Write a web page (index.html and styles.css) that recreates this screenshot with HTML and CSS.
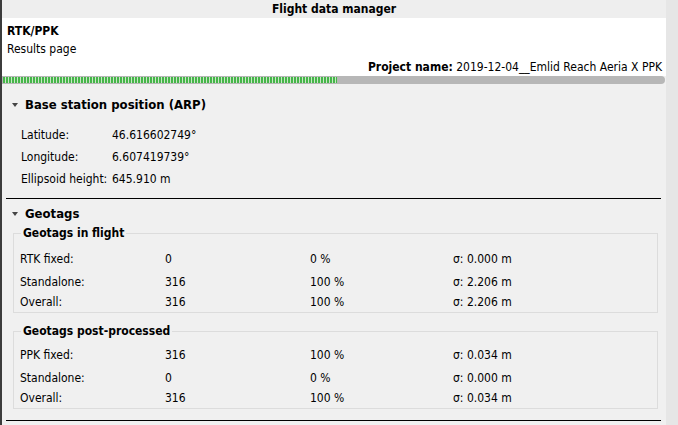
FILE: index.html
```html
<!DOCTYPE html>
<html>
<head>
<meta charset="utf-8">
<link rel="stylesheet" href="styles.css">
</head>
<body>
<div class="app">
  <div class="main">
    <div class="titlebar">Flight data manager</div>
    <div class="header">
      <div class="h-title">RTK/PPK</div>
      <div class="h-sub">Results page</div>
      <div class="h-project"><b>Project name:</b> 2019-12-04__Emlid Reach Aeria X PPK</div>
    </div>
    <div class="progress"><div class="progress-fill" style="width:50.5%"></div></div>

    <div class="section">
      <div class="sec-head"><span class="tri"></span>Base station position (ARP)</div>
      <div class="kv">
        <div class="kv-row"><span class="k">Latitude:</span><span class="v">46.616602749°</span></div>
        <div class="kv-row"><span class="k">Longitude:</span><span class="v">6.607419739°</span></div>
        <div class="kv-row"><span class="k">Ellipsoid height:</span><span class="v">645.910 m</span></div>
      </div>
    </div>
    <div class="rule"></div>

    <div class="section geo">
      <div class="sec-head"><span class="tri"></span>Geotags</div>
      <fieldset class="group">
        <legend>Geotags in flight</legend>
        <div class="grow g1"><span>RTK fixed:</span><span>0</span><span>0 %</span><span>σ: 0.000 m</span></div>
        <div class="grow g2"><span>Standalone:</span><span>316</span><span>100 %</span><span>σ: 2.206 m</span></div>
        <div class="grow g3"><span>Overall:</span><span>316</span><span>100 %</span><span>σ: 2.206 m</span></div>
      </fieldset>
      <fieldset class="group group-pp">
        <legend>Geotags post-processed</legend>
        <div class="grow g1"><span>PPK fixed:</span><span>316</span><span>100 %</span><span>σ: 0.034 m</span></div>
        <div class="grow g2"><span>Standalone:</span><span>0</span><span>0 %</span><span>σ: 0.000 m</span></div>
        <div class="grow g3"><span>Overall:</span><span>316</span><span>100 %</span><span>σ: 0.034 m</span></div>
      </fieldset>
    </div>
    <div class="rule rule2"></div>
  </div>
  <div class="scroll"></div>
</div>
</body>
</html>
```
FILE: styles.css
```css
html, body {
  margin: 0;
  padding: 0;
  background: #f0f0f0;
}
body {
  font-family: "DejaVu Sans", sans-serif;
  font-stretch: condensed;
  font-size: 12px;
  color: #000;
  width: 678px;
  height: 425px;
  overflow: hidden;
}
.app {
  display: flex;
  height: 425px;
  align-items: stretch;
}
.main {
  width: 664px;
  flex-shrink: 0;
  border-left: 2px solid #3c3c3c;
  background: #f0f0f0;
  overflow: hidden;
}
.scroll {
  width: 12px;
  flex-shrink: 0;
  background: #e6e6e6;
}
.titlebar {
  height: 18px;
  line-height: 19px;
  text-align: center;
  font-weight: bold;
  font-size: 12px;
  background: #eeeeee;
}
.header {
  background: #fff;
  height: 58px;
  padding: 5px 4px 0 5px;
  box-sizing: border-box;
}
.h-title {
  font-weight: bold;
  font-size: 12px;
  line-height: 17px;
}
.h-sub {
  line-height: 17px;
  margin-top: 1px;
}
.h-project {
  text-align: right;
  line-height: 17px;
  margin-top: 1px;
}
.h-project b {
  font-size: 12px;
}
.progress {
  height: 8px;
  margin-right: 1px;
  background: #b7b7b7;
  border-radius: 0 4px 4px 0;
  padding: 1px 0 1px 1px;
  box-sizing: border-box;
  display: flex;
}
.progress-fill {
  height: 100%;
  background: repeating-linear-gradient(90deg, #45b549 0 2px, #c9e8c6 2px 3px);
}
.section {
  padding: 0 0 0 8px;
}
.sec-head {
  font-weight: bold;
  font-size: 13px;
  height: 24px;
  line-height: 24px;
  margin-top: 9px;
  display: flex;
  align-items: center;
}
.tri {
  width: 0;
  height: 0;
  border-left: 3px solid transparent;
  border-right: 3px solid transparent;
  border-top: 4px solid #444;
  margin: 0 7px 0 2px;
}
.kv {
  padding: 7px 0 0 11px;
}
.kv-row {
  display: flex;
  height: 22px;
  line-height: 22px;
}
.k {
  width: 91px;
}
.rule {
  height: 1px;
  background: #000;
  margin: 8px 5px 0 4px;
}
.geo .sec-head {
  margin-top: 3px;
}
.group {
  margin: 0 8px 11px 3px;
  border: 1px solid #dcdcdc;
  padding: 9px 0 0 6px;
}
.group-pp {
  padding-top: 7px;
}
.group legend {
  font-weight: bold;
  font-size: 12px;
  padding: 0 2px;
  margin-left: 1px;
}
.grow {
  display: grid;
  grid-template-columns: 145px 145px 143px auto;
  height: 20px;
  line-height: 20px;
}
.g2 {
  margin-top: 3px;
}
.rule2 {
  margin-top: 0;
}
```
